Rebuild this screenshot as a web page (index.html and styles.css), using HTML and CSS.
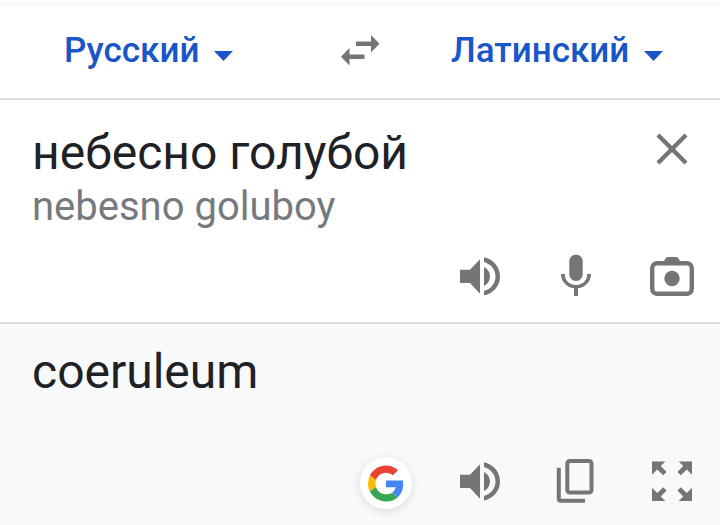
FILE: index.html
```html
<!DOCTYPE html>
<html lang="ru">
<head>
  <meta charset="UTF-8">
  <title>Переводчик</title>
  <link rel="stylesheet" href="styles.css">
</head>
<body>

<header class="languages">
  <button class="lang lang-from"><span>Русский</span><svg class="caret" viewBox="0 0 19 10"><path d="M0 0h19l-9.500 10z"/></svg></button>
  <button class="swap" aria-label="Поменять языки">
    <svg class="icon" viewBox="0 0 48 48"><path d="M20 15.500h15V9l8.500 8.800-8.500 8.800v-6.500H20zM28.500 28.500h-15V22L5 30.800l8.500 8.800V33h15z"/></svg>
  </button>
  <button class="lang lang-to"><span>Латинский</span><svg class="caret" viewBox="0 0 19 10"><path d="M0 0h19l-9.500 10z"/></svg></button>
</header>

<main>

  <section class="source">
    <div class="text">
      <p class="phrase phrase-source">небесно голубой</p>
      <p class="translit">nebesno goluboy</p>
    </div>
    <button class="clear" aria-label="Очистить">
      <svg class="icon" viewBox="0 0 48 48"><path class="line" d="M10 10l28 28M38 10l-28 28"/></svg>
    </button>
    <div class="actions">
      <button aria-label="Прослушать">
        <svg class="icon" viewBox="0 0 48 48"><path d="M4 17.800h10l10-10.500v34.500L14 31H4zM28 15c8 3.500 8 15.500 0 19z"/><path d="M28 5.300C37.500 7.500 44 15 44 24.400S37.500 41.300 28 43.500v-4.600c6.800-2 11.500-7.500 11.500-14.500S34.800 11.900 28 9.900z"/></svg>
      </button>
      <button aria-label="Голосовой ввод">
        <svg class="icon" viewBox="0 0 48 48"><rect x="17.300" y="2.500" width="13.400" height="26.500" rx="6.700"/><path d="M9 22h3.800c0 7 5 11 11.200 11s11.200-4 11.200-11H39c0 7.500-5.500 13.200-13 14.300V44h-4v-7.700C14.500 35.200 9 29.500 9 22z"/></svg>
      </button>
      <button aria-label="Камера">
        <svg class="icon" viewBox="0 0 48 48"><path d="M14.500 11l3.600-5.200q.6-.8 1.600-.8h8.600q1 0 1.600.8l3.600 5.200z"/><rect class="line" x="4.200" y="11.200" width="39.600" height="30.600" rx="5"/><circle cx="24" cy="26.500" r="7.700"/></svg>
      </button>
    </div>
  </section>

  <section class="result">
    <p class="phrase phrase-result">coeruleum</p>
    <div class="actions">
      <button class="google" aria-label="Найти в Google">
        <svg viewBox="0 0 48 48"><path fill="#ea4335" d="M24 9.500c3.540 0 6.710 1.220 9.210 3.600l6.850-6.850C35.900 2.380 30.470 0 24 0 14.620 0 6.510 5.380 2.560 13.220l7.980 6.190C12.430 13.720 17.740 9.500 24 9.500z"/><path fill="#4285f4" d="M46.980 24.550c0-1.570-.15-3.090-.38-4.550H24v9.020h12.940c-.58 2.960-2.260 5.480-4.780 7.180l7.730 6c4.510-4.180 7.090-10.360 7.090-17.650z"/><path fill="#fbbc05" d="M10.530 28.590A14.500 14.500 0 0 1 9.770 24c0-1.600.27-3.140.76-4.590l-7.980-6.190A23.900 23.900 0 0 0 0 24c0 3.880.92 7.540 2.560 10.780z"/><path fill="#34a853" d="M24 48c6.480 0 11.930-2.130 15.890-5.810l-7.730-6c-2.150 1.450-4.920 2.300-8.160 2.300-6.260 0-11.570-4.220-13.470-9.910l-7.980 6.190C6.510 42.620 14.620 48 24 48z"/></svg>
      </button>
      <button aria-label="Прослушать">
        <svg class="icon" viewBox="0 0 48 48"><path d="M4 17.800h10l10-10.500v34.500L14 31H4zM28 15c8 3.500 8 15.500 0 19z"/><path d="M28 5.300C37.500 7.500 44 15 44 24.400S37.500 41.300 28 43.500v-4.600c6.800-2 11.500-7.500 11.500-14.500S34.800 11.900 28 9.900z"/></svg>
      </button>
      <button aria-label="Копировать">
        <svg class="icon" viewBox="0 0 48 48"><rect class="line copy" x="15.300" y="4" width="24.200" height="31.500" rx="2.500"/><path class="line copy" d="M6.800 10.800v31q0 2 2 2H33"/></svg>
      </button>
      <button aria-label="На весь экран">
        <svg class="icon" viewBox="0 0 48 48"><path id="corner" d="M4 4.500h13.300l-4.500 4.500 5.700 6-3.300 3.300-6-5.700L4 17.800z"/><use href="#corner" transform="matrix(-1 0 0 1 48 0)"/><use href="#corner" transform="matrix(1 0 0 -1 0 48.500)"/><use href="#corner" transform="matrix(-1 0 0 -1 48 48.500)"/></svg>
      </button>
    </div>
  </section>

</main>

</body>
</html>
```
FILE: styles.css
```css
* { box-sizing: border-box; }
body { font-family: Roboto, sans-serif; background: white; color: #202124; margin: 0; height: 525px; overflow: hidden; }
p { margin: 0; white-space: nowrap; }
button { display: block; padding: 0; border: 0; background: none; font: inherit; color: inherit; }
svg { display: block; }

.languages { display: grid; grid-template-columns: 300px 120px 300px; align-items: center; height: 100px; border-top: 2px solid white; border-bottom: 2px solid #dedede; background: linear-gradient(#f5f5f5, white 6px); }
.lang { display: flex; align-items: center; color: #1a56c8; font-size: 35px; font-weight: 500; line-height: 40px; }
.lang span { padding-top: 1px; }
.lang-from { padding-left: 64px; gap: 15px; }
.lang-to { padding-left: 31px; gap: 15px; }
.caret { width: 19px; height: 10px; margin-top: 12px; fill: #1a56c8; }
.swap { justify-self: center; }

.icon { width: 48px; height: 48px; fill: #757575; }
.line { fill: none; stroke: #757575; stroke-width: 4.400; }
.copy { stroke-width: 4; }
.actions { display: flex; justify-content: flex-end; align-items: center; gap: 48px; }

.source { display: grid; grid-template-columns: 1fr 48px; grid-template-rows: 152px 48px; height: 224px; padding: 0 24px 0 32px; border-bottom: 2px solid #dcdee2; }
.source .actions { grid-column: 1 / 3; }
.phrase { font-size: 48px; line-height: 56px; }
.phrase-source { margin-top: 25px; }
.translit { margin-top: 2px; font-size: 40px; line-height: 48px; color: #757a7e; }
.clear { align-self: start; margin-top: 25px; }

.result { height: 201px; padding: 20px 24px 0 32px; background: #f8f9fb; }
.result .actions { height: 56px; margin-top: 53px; }
.google { display: grid; place-items: center; align-self: flex-end; width: 52px; height: 52px; margin-right: -4px; border-radius: 50%; background: white; box-shadow: 0 2px 8px rgba(60, 64, 67, .16); }
.google svg { width: 36px; height: 37px; }
```
